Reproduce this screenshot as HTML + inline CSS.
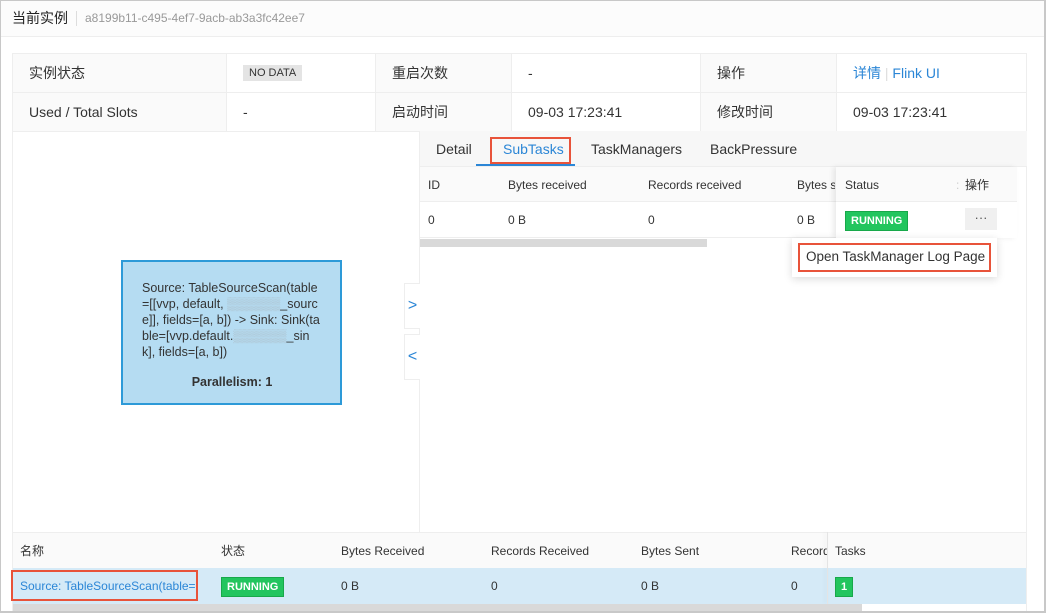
<!DOCTYPE html>
<html><head><meta charset="utf-8"><style>
*{box-sizing:border-box;margin:0;padding:0}
body{width:1046px;height:613px;overflow:hidden;background:#fff;font-family:"Liberation Sans","Noto Sans CJK SC",sans-serif;font-size:13px;color:#333;position:relative}
.a{position:absolute;white-space:nowrap;line-height:16px}
.t{font-size:14px}
.frame{position:absolute;left:0;top:0;width:1046px;height:613px;border:1px solid #c8c8c8;border-right:2px solid #c8c8c8;border-bottom:2px solid #c8c8c8}
.lbl{background:#fafafa}
.run{background:#22c55e;color:#fff;font-weight:bold;font-size:11px;padding:1px 5px;border:1px solid #18a84a}
.blur{color:#aab8c0}
</style></head><body>
<div class="a" style="left:0;top:0;width:1046px;height:37px;background:#fcfcfc;border-bottom:1px solid #eee"></div>
<div class="a" style="left:12px;top:10px;font-size:14px;color:#222">当前实例</div>
<div class="a" style="left:76px;top:11px;width:1px;height:15px;background:#ddd"></div>
<div class="a" style="left:85px;top:10px;font-size:12px;color:#999">a8199b11-c495-4ef7-9acb-ab3a3fc42ee7</div>

<div class="a" style="left:12px;top:53px;width:1015px;height:79px;border:1px solid #eee"></div>
<div class="a lbl" style="left:13px;top:54px;width:213px;height:77px"></div>
<div class="a lbl" style="left:376px;top:54px;width:135px;height:77px"></div>
<div class="a lbl" style="left:701px;top:54px;width:135px;height:77px"></div>
<div class="a" style="left:13px;top:92px;width:1013px;height:1px;background:#eee"></div>
<div class="a" style="left:226px;top:54px;width:1px;height:77px;background:#eee"></div>
<div class="a" style="left:375px;top:54px;width:1px;height:77px;background:#eee"></div>
<div class="a" style="left:511px;top:54px;width:1px;height:77px;background:#eee"></div>
<div class="a" style="left:700px;top:54px;width:1px;height:77px;background:#eee"></div>
<div class="a" style="left:836px;top:54px;width:1px;height:77px;background:#eee"></div>
<div class="a t" style="left:29px;top:65px">实例状态</div>
<div class="a" style="left:243px;top:65px;background:#e4e4e4;color:#333;font-size:11px;padding:0 6px">NO DATA</div>
<div class="a t" style="left:392px;top:65px">重启次数</div>
<div class="a t" style="left:528px;top:65px">-</div>
<div class="a t" style="left:717px;top:65px">操作</div>
<div class="a t" style="left:853px;top:65px;color:#2b86d6">详情 <span style="color:#ddd">|</span> Flink UI</div>
<div class="a t" style="left:29px;top:104px">Used / Total Slots</div>
<div class="a t" style="left:243px;top:104px">-</div>
<div class="a t" style="left:392px;top:104px">启动时间</div>
<div class="a t" style="left:528px;top:104px">09-03 17:23:41</div>
<div class="a t" style="left:717px;top:104px">修改时间</div>
<div class="a t" style="left:853px;top:104px">09-03 17:23:41</div>

<div class="a" style="left:12px;top:131px;width:1015px;height:482px;border-left:1px solid #eee;border-right:1px solid #eee"></div>
<div class="a" style="left:419px;top:131px;width:1px;height:401px;background:#eee"></div>
<div class="a" style="left:121px;top:260px;width:221px;height:145px;background:#b5dcf2;border:2px solid #2d9ad8;white-space:normal;padding:18px 18px 0 19px;font-size:12.5px;line-height:16px;color:#333;word-break:break-all">Source: TableSourceScan(table=[[vvp, default, <span class="blur">▒▒▒▒▒▒</span>_source]], fields=[a, b]) -&gt; Sink: Sink(table=[vvp.default.<span class="blur">▒▒▒▒▒▒</span>_sink], fields=[a, b])<div style="text-align:center;font-weight:bold;margin-top:14px">Parallelism: 1</div></div>
<div class="a" style="left:404px;top:283px;width:16px;height:46px;border:1px solid #eee;border-right:none;background:#fff;color:#2b86d6;font-size:16px;text-align:center;line-height:44px">&gt;</div>
<div class="a" style="left:404px;top:334px;width:16px;height:46px;border:1px solid #eee;border-right:none;background:#fff;color:#2b86d6;font-size:16px;text-align:center;line-height:44px">&lt;</div>

<div class="a" style="left:420px;top:131px;width:607px;height:36px;background:#f7f7f7;border-bottom:1px solid #eee"></div>
<div class="a t" style="left:436px;top:141px">Detail</div>
<div class="a t" style="left:503px;top:141px;color:#2b86d6">SubTasks</div>
<div class="a" style="left:490px;top:137px;width:81px;height:27px;border:2px solid #e8533a"></div>
<div class="a" style="left:476px;top:164px;width:99px;height:2px;background:#2b86d6"></div>
<div class="a t" style="left:591px;top:141px">TaskManagers</div>
<div class="a t" style="left:710px;top:141px">BackPressure</div>
<div class="a" style="left:420px;top:167px;width:597px;height:35px;background:#fafafa;border-bottom:1px solid #eee"></div>
<div class="a" style="left:420px;top:202px;width:597px;height:36px;border-bottom:1px solid #eee"></div>
<div class="a" style="left:428px;top:177px;font-size:12px">ID</div>
<div class="a" style="left:508px;top:177px;font-size:12px">Bytes received</div>
<div class="a" style="left:648px;top:177px;font-size:12px">Records received</div>
<div class="a" style="left:797px;top:177px;font-size:12px;width:38px;overflow:hidden">Bytes sent</div>
<div class="a" style="left:428px;top:212px;font-size:12px">0</div>
<div class="a" style="left:508px;top:212px;font-size:12px">0 B</div>
<div class="a" style="left:648px;top:212px;font-size:12px">0</div>
<div class="a" style="left:797px;top:212px;font-size:12px">0 B</div>
<div class="a" style="left:836px;top:167px;width:181px;height:71px;background:#fff;box-shadow:-3px 0 5px rgba(0,0,0,.08)"></div>
<div class="a" style="left:836px;top:167px;width:181px;height:35px;background:#fafafa;border-bottom:1px solid #eee"></div>
<div class="a" style="left:845px;top:177px;font-size:12px">Status</div>
<div class="a" style="left:956px;top:177px;font-size:12px;color:#ccc">:</div>
<div class="a" style="left:965px;top:177px;font-size:12px">操作</div>
<div class="a run" style="left:845px;top:211px">RUNNING</div>
<div class="a" style="left:965px;top:208px;width:32px;height:22px;background:#f0f0f0;text-align:center;line-height:20px;color:#555">···</div>
<div class="a" style="left:420px;top:239px;width:287px;height:8px;background:#d9d9d9"></div>
<div class="a" style="left:792px;top:238px;width:205px;height:39px;background:#fff;box-shadow:0 2px 8px rgba(0,0,0,.15)"></div>
<div class="a" style="left:798px;top:243px;width:193px;height:29px;border:2px solid #e8533a"></div>
<div class="a" style="left:806px;top:249px;font-size:13.5px">Open TaskManager Log Page</div>

<div class="a" style="left:13px;top:532px;width:1013px;height:36px;background:#fafafa;border-top:1px solid #eee"></div>
<div class="a" style="left:13px;top:568px;width:1013px;height:36px;background:#d5eaf7"></div>
<div class="a" style="left:20px;top:543px;font-size:12px">名称</div>
<div class="a" style="left:221px;top:543px;font-size:12px">状态</div>
<div class="a" style="left:341px;top:543px;font-size:12px">Bytes Received</div>
<div class="a" style="left:491px;top:543px;font-size:12px">Records Received</div>
<div class="a" style="left:641px;top:543px;font-size:12px">Bytes Sent</div>
<div class="a" style="left:791px;top:543px;font-size:12px;width:37px;overflow:hidden">Records Sent</div>
<div class="a" style="left:827px;top:532px;width:1px;height:72px;background:#e4e4e4;box-shadow:-2px 0 4px rgba(0,0,0,.08)"></div>
<div class="a" style="left:835px;top:543px;font-size:12px">Tasks</div>
<div class="a" style="left:11px;top:570px;width:187px;height:31px;border:2px solid #e8533a"></div>
<div class="a" style="left:20px;top:578px;font-size:12px;color:#2b86d6;width:176px;overflow:hidden">Source: TableSourceScan(table=..</div>
<div class="a run" style="left:221px;top:577px">RUNNING</div>
<div class="a" style="left:341px;top:578px;font-size:12px">0 B</div>
<div class="a" style="left:491px;top:578px;font-size:12px">0</div>
<div class="a" style="left:641px;top:578px;font-size:12px">0 B</div>
<div class="a" style="left:791px;top:578px;font-size:12px">0</div>
<div class="a run" style="left:835px;top:577px;padding:1px 5px">1</div>
<div class="a" style="left:13px;top:604px;width:849px;height:7px;background:#d9d9d9"></div>
<div class="frame"></div>
</body></html>
